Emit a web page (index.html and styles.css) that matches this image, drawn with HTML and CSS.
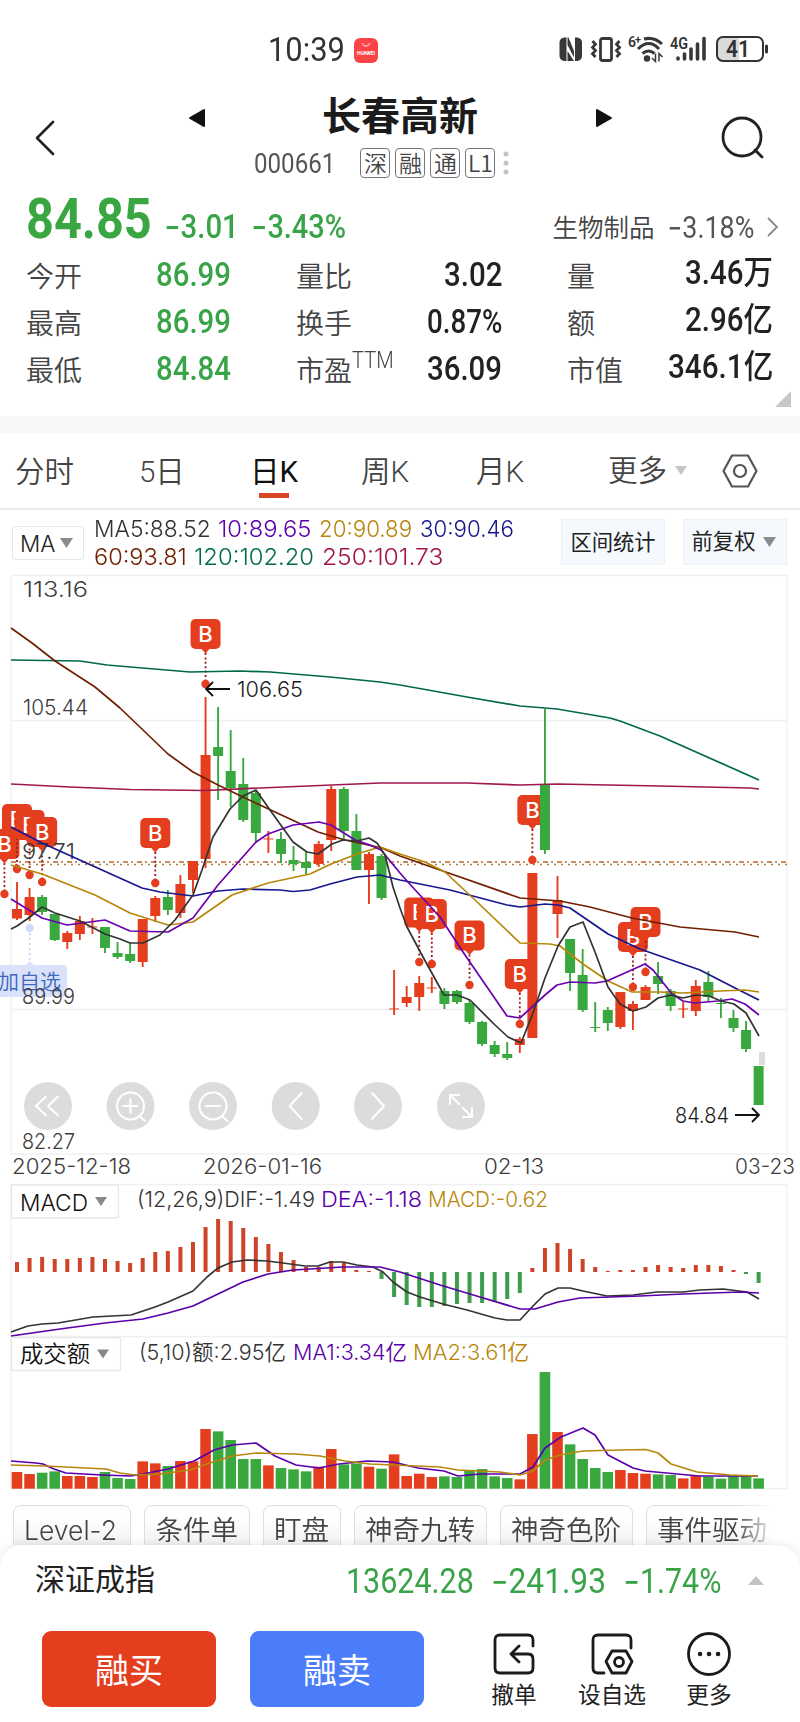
FILE: index.html
```html
<!DOCTYPE html>
<html lang="zh-CN">
<head>
<meta charset="utf-8">
<title>长春高新 000661</title>
<link rel="stylesheet" href="styles.css">
</head>
<body>
<div class="app">
  <header class="status">
    <span class="clock fit" data-w="77">10:39</span>
    <svg class="huawei" width="24" height="25" viewBox="0 0 24 25"><rect width="24" height="25" rx="6" fill="#fb4348"/><path d="M8.500 5c0 4 7 4 7 0" fill="none" stroke="#fff"/><text x="3" y="16.500" font-size="5" font-weight="700" textLength="18" fill="#fff">HUAWEI</text></svg>
    <svg class="sysicons" width="212" height="30" viewBox="0 0 212 30">
      <path d="M6 2.500h2.500v23.500H6q-4.500-1-4.500-5V7.500Q1.500 3.500 6 2.500zM19.500 26H17V2.500h2.500q4.500 1 4.500 5V21q0 4-4.500 5zM9.500 2.500h1L16 16v6.500L9.500 10zM9.500 16l6.500 10h-6.500z" fill="#383838"/>
      <g fill="none" stroke="#383838" stroke-width="2.800">
        <rect x="42.500" y="3.500" width="11" height="22" rx="2"/>
        <path d="M34.500 6l3 3.200-3 3.200 3 3.200-3 3.200 3 3.200M61.500 6l-3 3.200 3 3.200-3 3.200 3 3.200-3 3.200"/>
        <path d="M86 4q10-2.500 18 5M80 14q11-11 21 0M84.500 18.500q6-5 12 0" stroke-width="3"/>
        <path d="M97.500 18.500v8l-3.500-3.500M101 26.500v-8l3.500 3.500" stroke-width="1.500"/>
        <path d="M120 23v1M126.500 19v5M133 14v10M139.500 9v15M146 3.500v20.500" stroke-linecap="round" stroke-width="3.600"/>
      </g>
      <circle cx="89" cy="23.500" r="3.200" fill="#383838"/>
      <path d="M165 2h-1q-6 0-6 6v12q0 6 6 6h17V2z" fill="#dadada"/>
      <rect x="159" y="2" width="46" height="24" rx="6" fill="none" stroke="#333" stroke-width="2"/>
      <path d="M208.500 11v6" stroke="#333" stroke-width="3" stroke-linecap="round"/>
      <g class="sysnum"><text x="70" y="12" font-size="14">6</text><text x="77" y="8" font-size="11">+</text><text x="112" y="14" font-size="16" textLength="18" lengthAdjust="spacingAndGlyphs">4G</text><text x="168" y="22" font-size="23" textLength="24" lengthAdjust="spacingAndGlyphs">41</text></g>
    </svg>
  </header>

  <nav class="titlebar">
    <svg class="back" width="24" height="38" viewBox="0 0 24 38"><path d="M20 3L4 19l16 16" fill="none" stroke="#222" stroke-width="2.600" stroke-linecap="round" stroke-linejoin="round"/></svg>
    <svg class="tri" width="18" height="20" viewBox="0 0 18 20"><path d="M2 10L16 2v16z" fill="#111" stroke="#111" stroke-width="2" stroke-linejoin="round"/></svg>
    <div class="stock">
      <h1>长春高新</h1>
      <div class="code"><span class="num fit" data-w="81">000661</span><span class="badges"><b>深</b><b>融</b><b>通</b><b>L1</b></span><svg width="6" height="24" viewBox="0 0 6 24" fill="#c4c4c4"><circle cx="3" cy="3" r="2.500"/><circle cx="3" cy="12" r="2.500"/><circle cx="3" cy="21" r="2.500"/></svg></div>
    </div>
    <svg class="tri next" width="18" height="20" viewBox="0 0 18 20"><path d="M16 10L2 2v16z" fill="#111" stroke="#111" stroke-width="2" stroke-linejoin="round"/></svg>
    <svg class="search" width="46" height="46" viewBox="0 0 46 46" fill="none" stroke="#222" stroke-width="2.800" stroke-linecap="round"><circle cx="22" cy="22" r="19"/><path d="M35 35l7 7"/></svg>
  </nav>

  <section class="quote">
    <div class="headline">
      <span class="price fit" data-w="126">84.85</span>
      <span class="chg fit" data-w="72"><i>-</i>3.01</span>
      <span class="pct fit" data-w="92"><i>-</i>3.43%</span>
      <span class="sector">生物制品</span>
      <span class="sectorpct fit" data-w="84"><i>-</i>3.18%</span>
      <svg width="14" height="22" viewBox="0 0 14 22"><path d="M2 2l9 9-9 9" fill="none" stroke="#888" stroke-width="1.800"/></svg>
    </div>
    <div class="stats">
      <div class="stat g"><label>今开</label><span class="fit" data-w="75">86.99</span></div>
      <div class="stat"><label>量比</label><span class="fit" data-w="58">3.02</span></div>
      <div class="stat cn"><label>量</label><span class="fit" data-w="88">3.46万</span></div>
      <div class="stat g"><label>最高</label><span class="fit" data-w="75">86.99</span></div>
      <div class="stat"><label>换手</label><span class="fit" data-w="75">0.87%</span></div>
      <div class="stat cn"><label>额</label><span class="fit" data-w="88">2.96亿</span></div>
      <div class="stat g"><label>最低</label><span class="fit" data-w="75">84.84</span></div>
      <div class="stat"><label>市盈<sup class="fit" data-w="42">TTM</sup></label><span class="fit" data-w="75">36.09</span></div>
      <div class="stat cn"><label>市值</label><span class="fit" data-w="105">346.1亿</span></div>
    </div>
    <svg class="corner" width="16" height="16" viewBox="0 0 16 16"><path d="M16 0v16H0z" fill="#c8c8c8"/></svg>
  </section>

  <div class="tabs">
    <span>分时</span><span>5日</span><span class="active">日K</span><span>周K</span><span>月K</span>
    <span class="more">更多<svg width="12" height="9" viewBox="0 0 12 9"><path d="M0 0h12L6 9z" fill="#c6c6c6"/></svg></span>
    <svg class="gear" width="36" height="36" viewBox="0 0 36 36" fill="none" stroke="#555" stroke-width="2.200" stroke-linejoin="round"><path d="M10 2.500h16L34.500 18 26 33.500H10L1.500 18z"/><circle cx="18" cy="18" r="6"/></svg>
  </div>

  <div class="legendbar">
    <div class="select">MA<svg width="13" height="10" viewBox="0 0 13 10"><path d="M0 0h13L6.500 10z" fill="#8a8a8a"/></svg></div>
    <div class="mas">
      <div><span class="fit k" data-w="117">MA5:88.52</span><span class="fit p" data-w="93">10:89.65</span><span class="fit y" data-w="93">20:90.89</span><span class="fit b" data-w="94">30:90.46</span></div>
      <div><span class="fit n" data-w="93">60:93.81</span><span class="fit t" data-w="120">120:102.20</span><span class="fit r" data-w="121">250:101.73</span></div>
    </div>
    <div class="tool">区间统计</div>
    <div class="tool adj">前复权<svg width="13" height="10" viewBox="0 0 13 10"><path d="M0 0h13L6.500 10z" fill="#8a8a8a"/></svg></div>
  </div>

  <svg id="chart" class="chart" width="800" height="924" viewBox="0 571 800 924"></svg>

  <div class="chips"><span>Level-2</span><span>条件单</span><span>盯盘</span><span>神奇九转</span><span>神奇色阶</span><span>事件驱动</span></div>

  <footer class="sheet">
    <div class="index">
      <span class="name">深证成指</span>
      <span class="fit v1" data-w="128">13624.28</span><span class="fit v2" data-w="112"><i>-</i>241.93</span><span class="fit v3" data-w="95"><i>-</i>1.74%</span>
      <svg width="16" height="9" viewBox="0 0 16 9"><path d="M0 9h16L8 0z" fill="#c4c4c4"/></svg>
    </div>
    <div class="actions">
      <button class="buy">融买</button><button class="sell">融卖</button>
      <div class="act a1"><svg width="44" height="44" viewBox="0 0 44 44"><path d="M41 14V8q0-5-5-5H8Q3 3 3 8v28q0 5 5 5h28q5 0 5-5V27q0-5-5-5H20M27 14l-8 8 8 8"/></svg>撤单</div>
      <div class="act a2"><svg width="44" height="44" viewBox="0 0 44 44"><path d="M41 16V8q0-5-5-5H8Q3 3 3 8v28q0 5 5 5h6M22 19h14l6 10.500L36 41H22l-6-11.500z"/><circle cx="29" cy="30" r="4.500"/></svg>设自选</div>
      <div class="act a3"><svg width="44" height="44" viewBox="0 0 44 44"><circle cx="22" cy="22" r="20.500"/><path d="M13 22h.1M22 22h.1M31 22h.1" stroke-width="4.500"/></svg>更多</div>
    </div>
  </footer>
</div>
<script src="chart.js"></script>
</body>
</html>
```

FILE: styles.css
```css
* { box-sizing: border-box; }
body { margin: 0; background: #fff; font-family: "Roboto", "Noto Sans CJK SC", sans-serif; color: #222; }
.app { width: 800px; height: 1722px; overflow: hidden; display: flex; flex-direction: column; }
.app > * { flex: none; }
svg { display: block; flex: none; }
i { display: inline-block; font-style: normal; font-family: "Inter", sans-serif; transform: scaleX(1.2); transform-origin: right center; }
.fit { display: inline-block; white-space: nowrap; transform-origin: left center; flex: none; }

.status { height: 90px; padding: 10px 0 0 268px; display: flex; align-items: center; color: #333; }
.clock { font-size: 32.500px; }
.huawei { margin-left: 9px; }
.sysicons { margin-left: 180px; }
.sysnum { font-family: "Roboto", sans-serif; font-weight: 600; fill: #333; }

.titlebar { height: 100px; display: flex; align-items: flex-start; padding-left: 33px; }
.back { margin-top: 29px; }
.tri { margin: 18px 0 0 131px; }
.stock { width: 389px; height: 100px; }
.stock h1 { margin: -2px 0 0 116px; font-size: 39px; line-height: 50px; font-weight: 700; color: #1b1b1b; white-space: nowrap; font-family: "Noto Sans CJK SC", sans-serif; }
.tri.next { margin-left: 0; }
.search { margin: 25px 0 0 107px; }
.code { margin: 10px 0 0 48px; display: flex; align-items: center; height: 30px; color: #555; }
.code .num { font-size: 28px; }
.badges { display: flex; gap: 5px; margin: 0 8px 0 25px; }
.badges b { width: 30px; height: 30px; border: 1.500px solid #777; border-radius: 4px; font: 350 23px/26px "Noto Sans CJK SC", sans-serif; text-align: center; color: #444; }

.quote { height: 226px; display: grid; grid-template-rows: 62px 142px 16px; }
.headline { display: flex; align-items: baseline; padding: 0 0 0 26px; color: #39a347; white-space: nowrap; }
.price { font-size: 56px; font-weight: 700; line-height: 59px; color: #3aa642; }
.chg { font-size: 33px; margin-left: 15px; font-weight: 500; }
.pct { font-size: 33px; margin-left: 16px; font-weight: 500; }
.sector { margin-left: 206px; font-size: 25.500px; color: #444; font-weight: 350; position: relative; top: -1px; }
.sectorpct { margin-left: 15px; font-size: 31px; color: #555; }
.headline svg { margin-left: 12px; }
.stats { display: grid; grid-template-columns: 205px 206px 206px; column-gap: 65px; grid-auto-rows: 47px; padding-left: 26px; }
.stat { display: flex; justify-content: space-between; align-items: center; height: 45px; }
.stat label { font-size: 28px; font-weight: 350; color: #444; white-space: nowrap; }
.stat span { font-size: 32.500px; font-weight: 500; color: #222; line-height: 38px; }
.stat.cn span { margin-top: -3px; }
.stat.g span { color: #39a347; }
.stat sup { font-size: 23px; line-height: 0; vertical-align: 13px; }
.corner { margin-left: 775px; margin-top: -3px; }

.tabs { border-top: 17px solid #f7f7f7; border-bottom: 2px solid #ebebeb; height: 94px; display: grid; grid-template-columns: 124px 111px 111px 115px 132px 114px 60px; padding-left: 15px; align-items: center; font-size: 29.500px; font-weight: 350; color: #444; white-space: nowrap; }
.tabs > * { height: 75px; line-height: 78px; }
.tabs .active { color: #111; font-weight: 400; background: linear-gradient(#d94526, #d94526) 9px 60px / 30px 5px no-repeat; }
.tabs .more { display: flex; align-items: center; gap: 8px; }
.tabs .gear { height: 36px; }

.legendbar { height: 61px; display: flex; padding: 9px 0 0 12px; }
.select { width: 72px; height: 34px; margin-top: 7px; border: 1.500px solid #e6e6e6; border-radius: 3px; display: flex; align-items: center; gap: 5px; padding-left: 7px; font: 350 22.500px "Inter", sans-serif; }
.mas { margin: -4px 0 0 10px; width: 467px; font: 350 23px/28px "Inter", sans-serif; }
.mas div { display: flex; gap: 7.500px; }
.k { color: #333; } .p { color: #5a00aa; } .y { color: #b8860b; } .b { color: #16168c; } .n { color: #702000; } .t { color: #006b4e; } .r { color: #a3124c; }
.tool { width: 104px; height: 46px; background: #f5f9fe; border: 1px solid #edf1f6; font-size: 21.300px; line-height: 46px; text-align: center; white-space: nowrap; }
.adj { margin-left: 18px; display: flex; align-items: center; justify-content: center; gap: 8px; padding-right: 2px; }
.chart { font-family: "Inter", "Noto Sans CJK SC", sans-serif; font-size: 22px; font-weight: 350; }

.chips { height: 50px; padding: 10px 0 0 13px; display: flex; gap: 13px; overflow: hidden; -webkit-mask-image: linear-gradient(90deg, #000 735px, transparent 776px); mask-image: linear-gradient(90deg, #000 735px, transparent 776px); }
.chips span { height: 60px; border: 1.500px solid #dedede; border-radius: 8px; padding: 0 10.500px; font-size: 27.500px; line-height: 49px; font-weight: 350; color: #444; white-space: nowrap; background: linear-gradient(#fff 20%, #f1f1f1 70%); }
.chips span:first-child { font-family: "Inter", "Noto Sans CJK SC", sans-serif; font-size: 26.500px; width: 118px; padding: 0 10px; }

.sheet { height: 177px; border-radius: 22px 22px 0 0; background: #fff; box-shadow: 0 0 8px rgba(0,0,0,.12); position: relative; }
.index { height: 73px; display: flex; align-items: center; padding: 0 0 2px 35px; white-space: nowrap; color: #39a347; font-size: 34.500px; }
.index .name { font-size: 30px; width: 311px; color: #222; line-height: 40px; margin-top: -2px; }
.v2 { margin-left: 20px; } .v3 { margin-left: 20px; }
.index svg { margin-left: 27px; }
.actions { display: flex; padding: 13px 0 0 42px; }
button { width: 174px; height: 76px; border: 0; border-radius: 9px; color: #fff; font: 400 34px "Noto Sans CJK SC", sans-serif; padding: 0 0 2px; }
.buy { background: #e43e1e; }
.sell { background: #4b7cf9; margin-left: 34px; }
.act { width: 80px; display: flex; flex-direction: column; align-items: center; font-size: 22.700px; line-height: 42px; color: #222; white-space: nowrap; }
.act svg { fill: none; stroke: #1b1b1b; stroke-width: 2.800; stroke-linecap: round; stroke-linejoin: round; margin: 1px 0 -1px; }
.a1 { margin-left: 50px; } .a2 { margin-left: 18px; } .a3 { margin-left: 17px; }
```

FILE: chart.js
```js
const RED = '#e43e1e', GREEN = '#39a83f';
const PITCH = 12.57, FIRST = 17;
const cx = i => FIRST + i * PITCH;
const out = [];
const add = s => out.push(s);
const line = (x1, y1, x2, y2, c, w = 1.5, extra = '') =>
  add(`<path d="M${x1} ${y1}L${x2} ${y2}" stroke="${c}" stroke-width="${w}" fill="none" ${extra}/>`);
const rect = (x, y, w, h, c, r = 0) => add(`<rect x="${x}" y="${y}" width="${w}" height="${h}" rx="${r}" fill="${c}"/>`);
const poly = (pts, c) => add(`<polyline points="${pts}" fill="none" stroke="${c}" stroke-width="1.700" stroke-linejoin="round"/>`);
const text = (x, y, s, w, c = '#3c3c3c', extra = '') =>
  add(`<text x="${x}" y="${y}" fill="${c}" textLength="${w}" lengthAdjust="spacingAndGlyphs" ${extra}>${s}</text>`);

// frames and grid
for (const y of [575.5, 720.5, 1009.5, 1154, 1184.5, 1336.5, 1488.5]) line(11, y, 787, y, '#f0f0f0', 1.3);
for (const x of [11, 787]) { line(x, 575, x, 1154, '#f0f0f0', 1.3); line(x, 1184, x, 1489, '#f0f0f0', 1.3); }
line(11, 862, 787, 862, '#b5682c', 1.4, 'stroke-dasharray="5 3 2 4"');
line(11, 864.5, 787, 864.5, '#a8823a', 1.4, 'stroke-dasharray="2 5" stroke-dashoffset="3"');

text(23, 597, '113.16', 65);
text(23, 715, '105.44', 65);
text(22, 1149, '82.27', 53);

// watch-list tag
rect(-12, 965, 79, 32, '#d9e2fa', 4);
add('<path d="M25 966l4.700-5 4.700 5z" fill="#d9e2fa"/>');
line(29.7, 928, 29.7, 963, '#c3cff0', 1.6, 'stroke-dasharray="2 3"');
add('<circle cx="29.700" cy="928" r="4" fill="#cfdbf9"/>');
text(-2, 989, '加自选', 63, '#3f67bd', 'font-size="21"');
text(22, 1004, '89.99', 53);

// buy markers: candle index, box top, dot centre
[[-1,829,894],[0,804,869],[1,810,875],[2,817,882],[11,818,883],[15,619,684],[32,897.5,962],[33,899,964],[36,920.5,985],[40,959,1024],[41,795,860],[49,922,987],[50,907,972]].forEach(([i, top, dot]) => {
  const x = cx(i);
  line(x, top + 34, x, dot, '#9c1a1a', 1.8, 'stroke-dasharray="2 2.400"');
  rect(x - 15, top, 30, 30, RED, 5);
  add(`<path d="M${x - 4.5} ${top + 29.5}h9l-4.500 5z" fill="${RED}"/><circle cx="${x}" cy="${dot}" r="4.200" fill="${RED}"/>`);
  add(`<text x="${x}" y="${top + 22.5}" fill="#fff" text-anchor="middle" font-size="22" font-weight="500">B</text>`);
});
text(22, 859, '97.71', 53);

// candles: colour, high, body top, body bottom, low
const candles = `R,882,909,918.5,920 R,888,897,915,921 G,895,897,912,915 G,914,914,940,941 R,931,933,942,949 R,916,921,934,940 R,918,926.5,927.5,934 G,927,927,948,953 G,942,953,957,959 G,943,954,961,963
R,919,919,962,967 R,896,898,916,922 G,890,897,910,915 R,875,884,913,918 R,861,861,880,893 R,697,755,859,868 G,707,747,756,800 G,730,771,788,807 G,758,784,820,822 G,790,793,833,843
R,831,838.5,839.5,853 G,832,839,854,863 G,846,860,864,871 G,852,862,868,874 R,841,844,864,867 R,786,789,840,851 G,787,789,831,840 G,814,831,870,870 R,852,854,870,904 G,854,856,898,900
R,970,1008.5,1009.5,1015 R,986,997,1003,1007 R,976,983,997,1011 R,977,987.5,988.5,993 G,988,991,1004,1009 G,990,991,1002,1004 G,1000,1003,1022,1024 G,1021,1022,1044,1046 G,1041,1045,1054,1057 G,1042,1054,1058,1060
R,1037,1039,1045,1053 R,873,873,1038,1038 G,709,785,850,854 R,876,900,914,938 G,939,939,973,991 G,949,975,1010,1012 G,1002,1027,1028,1032 G,1007,1010,1023,1031 R,992,992,1027,1029 R,1001,1004,1011,1030
R,985,987,1000,1000 G,962,976,984,994 G,989,991,1006,1011 R,1002,1008.5,1009.5,1018 R,980,986,1011,1016 G,971,982,997,1001 G,998,1003,1004,1018 G,1010,1018,1028,1032 G,1021,1030,1049,1052 G,1066,1066,1105,1105`
  .split(/\s+/).map(s => s.split(',')).map(([c, ...v]) => [c === 'R' ? RED : GREEN, ...v.map(Number)]);
candles.forEach(([c, h, t, b, l], i) => {
  line(cx(i), h, cx(i), l, c, 1.9);
  rect(cx(i) - 5, t, 10, b - t, c);
});
rect(759, 1052, 6, 13, '#dcdcdc');

// moving averages
poly('11,660 80,661 107,665 190,672 240,671 270,672 330,677 380,682 400,685 467,697 520,706 545,708 557,709 610,718 620,721 660,736 759,780', '#00694a');
poly('11,784 70,787 130,789.500 205,790.500 260,788 380,783 467,783 520,785 557,784 660,786 750,788 759,789', '#a01850');
poly('11,628 32,643 55,661 95,687 120,708 143,730 168,754 193,772 218,785 245,798 275,812 318,832 345,840 382,848 400,856 440,870 520,898 560,901 590,907 632,918 680,927 735,932 759,937', '#702000');
poly('11,827 42,843 142,888 160,892 193,896 218,891 243,889 280,890 293,891.500 310,890 330,884 357,877 380,875 400,880 450,890 507,905 520,907 545,904 558,905 570,908 608,934 640,949 700,970 735,988 759,1000', '#17178e');
poly('11,865 42,874 95,895 130,913 168,925 193,922 232,895 268,883 310,874 331,864 357,854 380,847 400,854 425,862 445,872 475,900 520,943 550,944 560,946 583,964 608,981 632,992 660,992 683,993 720,991 745,990 759,992', '#b8860b');
poly('11,899 42,918 67,925 105,920 130,931 168,932 193,918 218,885 256,842 268,834 293,825 319,822 331,825 355,840 370,845 381,850 400,873 407,881 440,917 465,955 507,1016 520,1018 545,995 557,985 570,982 595,983 607,981 645,964 653,970 672,994 683,1001 695,1003 718,1001 732,999 745,1004 759,1015', '#6b00b0');
poly('11,929 17,926 30,917 42,907 55,913 80,921 105,934 120,939 130,943 143,943 160,935 175,920 193,895 202,870 213,837 230,809 243,796 256,790 270,810 293,842 307,852 318,854 332,844 343,840 357,841 369,838 377,843 385,855 393,887 400,908 407,927 423,957 444,995 457,995 470,1000 495,1025 508,1037 521,1043 533,1013 545,978 558,946 570,927 583,922 595,952 608,987 620,1004 633,1011 646,1007 658,998 671,995 683,998 696,995 709,996 721,1001 734,1004 746,1013 759,1036', '#333');

// extremes
add('<path d="M230 689H207M213 682l-7 7 7 7M735 1115h23M752 1108l7 7-7 7" fill="none" stroke="#111" stroke-width="1.800"/>');
text(237, 697, '106.65', 66, '#1b1b1b');
text(675, 1123, '84.84', 54, '#1b1b1b');

// navigation controls
const icons = ['M-2-9.500l-10 9.500 10 9.500M10-9.500L0 0l10 9.500', 'M-7 0H7M0-7V7', 'M-7 0H7', 'M6-13L-6 0 6 13', 'M-6-13L6 0-6 13', 'M-11-2v-9h9M-11-11l9 9M11 2v9H2M11 11L2 2'];
[48, 130.5, 213, 295.7, 378, 461].forEach((x, i) => {
  add(`<g transform="translate(${x} 1106)"><circle r="24" fill="#dcdcdc"/><g fill="none" stroke="#fff" stroke-width="2" stroke-linejoin="round" stroke-linecap="round"><path d="${icons[i]}"/>${i === 1 || i === 2 ? '<circle r="13.500"/><path d="M9.500 10.500l5 4.500"/>' : ''}</g></g>`);
});
text(12, 1174, '2025-12-18', 119);
text(203, 1174, '2026-01-16', 119);
text(484, 1174, '02-13', 60);
text(735, 1174, '03-23', 60);

const select = (y, w, label, lw, baseline) => {
  add(`<rect x="11.500" y="${y}" width="${w}" height="33" rx="2" fill="#fff" stroke="#e8e8e8" stroke-width="1.300"/>`);
  text(20, baseline, label, lw, '#111', 'font-size="22.500"');
  add(`<path d="M${w - 12} ${y + 12}h12l-6 9z" fill="#888"/>`);
};

// MACD
const base = 1272;
select(1185, 107, 'MACD', 68, 1211);
text(137, 1207, '(12,26,9)DIF:-1.49', 178, '#333');
text(321, 1207, 'DEA:-1.18', 101, '#5a00aa');
text(428, 1207, 'MACD:-0.62', 120, '#b8860b');
const macd = [10,14,15,13,13,14,15,13,11,9,14,20,21,25,30,45,53,51,44,35,28,20,12,5,5,11,9,2,1,-7,-25,-33,-35,-35,-34,-32,-31,-31,-30,-27,-21,4,24,29,23,13,5,1,2,2,5,7,5,4,7,7,6,2,-2,-11];
macd.forEach((v, i) => rect(cx(i) - 2, v > 0 ? base - v : base, 4, Math.abs(v), v > 0 ? '#cf4428' : '#3f9c4c'));
poly('11,1332 28,1326 42,1324 58,1323 93,1317 131,1315 155,1307 168,1302 193,1291 207,1277 218,1268 232,1262 247,1260 267,1261 283,1263 305,1266 318,1266 330,1262 343,1262 357,1265 373,1267 383,1272 393,1282 400,1287 407,1292 420,1297 443,1304 467,1310 495,1318 507,1320 520,1320 533,1306 545,1294 558,1288 570,1288 583,1291 607,1296 633,1295 657,1292 683,1292 700,1290 723,1289 747,1292 759,1299', '#333');
poly('11,1336 60,1329 105,1323 143,1319 168,1313 193,1306 218,1294 243,1282 268,1274 293,1270 343,1267 380,1267 400,1272 440,1285 480,1297 520,1309 535,1309 558,1302 580,1298 640,1296 683,1294 740,1292 759,1293', '#5a00aa');

// turnover
select(1337.5, 109, '成交额', 70, 1362);
text(139, 1360, '(5,10)额:2.95亿', 147, '#333');
text(293, 1360, 'MA1:3.34亿', 114, '#5a00aa');
text(413, 1360, 'MA2:3.61亿', 116, '#b8860b');
const volume = [50,44,48,52,38,38,35,50,32,29,82,76,68,83,82,179,172,146,89,89,70,62,58,52,66,119,73,76,66,60,103,38,45,35,37,35,56,59,37,32,28,164,350,170,133,89,62,50,56,47,45,43,41,31,38,36,30,38,38,31];
volume.forEach((v, i) => rect(cx(i) - 5.3, 1488.7 - v / 3, 10.6, v / 3, candles[i][0]));
poly('11,1461 36,1463 43,1464 54,1469 66,1473 102,1475 131,1476 143,1474 168,1469 194,1461 214,1450 232,1445 256,1443 275,1456 296,1465 319,1468 339,1464 367,1461 393,1462 418,1468 444,1471 458,1476 480,1474 520,1474 533,1467 545,1448 561,1437 583,1428 595,1435 608,1455 633,1468 645,1471 699,1476 758,1476', '#5a00aa');
poly('11,1465 45,1466 106,1469 120,1473 135,1475 160,1474 190,1470 207,1464 232,1456 256,1453 295,1454 320,1456 345,1461 370,1464 393,1465 440,1467 458,1470 500,1472 520,1475 533,1471 545,1460 560,1455 583,1451 620,1450 646,1449.500 658,1453 671,1464 697,1472 730,1475 758,1476', '#b8860b');

document.getElementById('chart').innerHTML = out.join('');

document.querySelectorAll('.fit').forEach(el => {
  const natural = el.offsetWidth, w = +el.dataset.w;
  el.style.transform = `scaleX(${w / natural})`;
  el.style.marginRight = `${w - natural}px`;
});
```
